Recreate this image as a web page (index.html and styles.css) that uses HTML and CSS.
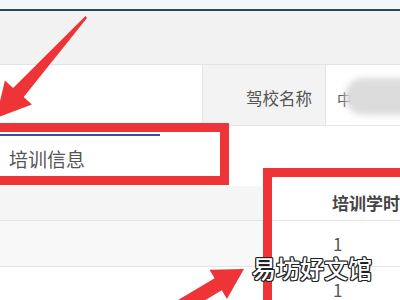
FILE: index.html
```html
<!DOCTYPE html>
<html lang="zh">
<head>
<meta charset="utf-8">
<link rel="stylesheet" href="styles.css">
</head>
<body>
<div class="page">
  <div class="top-strip"></div>
  <div class="top-line"></div>
  <div class="band"></div>
  <div class="info-row">
    <div class="cell cell-blank"></div>
    <div class="cell cell-label">驾校名称</div>
    <div class="cell cell-value">中<span class="mask"></span></div>
  </div>
  <div class="tabs"><div class="tab-active"></div></div>
  <div class="section-title">培训信息</div>
  <div class="table">
    <div class="tr th">
      <div class="td td-side"></div>
      <div class="td td-main">培训学时</div>
    </div>
    <div class="tr row-alt">
      <div class="td td-side"></div>
      <div class="td td-main">1</div>
    </div>
    <div class="tr row-last">
      <div class="td td-side"></div>
      <div class="td td-main">1</div>
    </div>
  </div>

  <div class="mark mark-tab"></div>
  <div class="mark mark-col"></div>
  <svg class="arrows" width="400" height="300" viewBox="0 0 400 300">
    <polygon fill="#ef3438" points="85.5,16 87,18 23.7,97.1 31.9,104.4 -4,118 4.9,80.6 13.1,87.9"/>
    <polygon fill="#ef3438" points="244,269 226.9,298.9 221.8,290.3 183.6,313 176.4,301 214.6,278.3 209.5,269.7"/>
  </svg>
  <div class="watermark">易坊好文馆</div>
</div>
</body>
</html>
```
FILE: styles.css
```css
html, body {
  margin: 0;
  padding: 0;
  background: #ffffff;
}
body {
  font-family: "Noto Sans CJK SC", "Noto Sans", sans-serif;
}
.page {
  position: relative;
  width: 400px;
  height: 300px;
  overflow: hidden;
  background: #ffffff;
}
.top-strip {
  height: 9px;
  background: #f4f7f8;
}
.top-line {
  height: 2px;
  background: #2e4859;
}
.band {
  height: 53px;
  background: #f2f2f2;
  border-bottom: 1px solid #e3e3e3;
}
.info-row {
  display: flex;
  height: 60px;
  border-bottom: 1px solid #e6e6e6;
}
.cell {
  display: flex;
  align-items: center;
  box-sizing: border-box;
}
.cell-blank {
  width: 203px;
  border-right: 1px solid #e6e6e6;
  background: #ffffff;
}
.cell-label {
  width: 123px;
  background: #f3f3f3;
  border-right: 1px solid #e4e4e4;
  justify-content: flex-end;
  padding-right: 13px;
  font-size: 16.5px;
  color: #555555;
  padding-top: 6px;
}
.cell-value {
  flex: 1;
  position: relative;
  padding-left: 11px;
  padding-top: 6px;
  font-size: 15px;
  color: #555555;
}
.mask {
  position: absolute;
  left: 19px;
  top: 13px;
  width: 90px;
  height: 37px;
  border-radius: 18px;
  background: #dcdcdc;
  filter: blur(3px);
}
.tabs {
  padding-top: 8px;
}
.tab-active {
  width: 160px;
  height: 2px;
  background: #3a4d9c;
}
.section-title {
  box-sizing: border-box;
  height: 50px;
  padding: 10px 0 0 9px;
  font-size: 19px;
  line-height: 26px;
  color: #555555;
}
.table {
  display: flex;
  flex-direction: column;
}
.tr {
  display: flex;
  height: 34px;
  border-bottom: 1px solid #e5e5e5;
}
.th {
  font-weight: bold;
  font-size: 17px;
  color: #444444;
}
.th .td-side {
  background: #f5f5f5;
}
.row-alt {
  height: 45px;
  font-size: 17px;
  color: #555555;
}
.row-alt .td-side {
  background: #f8f8f8;
}
.row-last {
  height: 46px;
  font-size: 17px;
  color: #555555;
  border-bottom: none;
}
.td {
  display: flex;
  align-items: center;
  line-height: 20px;
}
.td-side {
  width: 263px;
}
.td-main {
  flex: 1;
  padding-left: 70px;
  background: #ffffff;
  white-space: nowrap;
}
.mark {
  position: absolute;
  box-sizing: border-box;
  border: 9px solid #ef3438;
}
.mark-tab {
  left: -12px;
  top: 123px;
  width: 241px;
  height: 62px;
}
.mark-col {
  left: 263px;
  top: 168px;
  width: 200px;
  height: 200px;
}
.arrows {
  position: absolute;
  left: 0;
  top: 0;
}
.watermark {
  position: absolute;
  left: 252px;
  top: 251px;
  font-size: 24px;
  line-height: 34px;
  font-weight: 500;
  color: #ffffff;
  text-shadow:
    1px 0 0 #222, -1px 0 0 #222, 0 1px 0 #222, 0 -1px 0 #222,
    1px 1px 0 #222, -1px -1px 0 #222, 1px -1px 0 #222, -1px 1px 0 #222;
}
```
